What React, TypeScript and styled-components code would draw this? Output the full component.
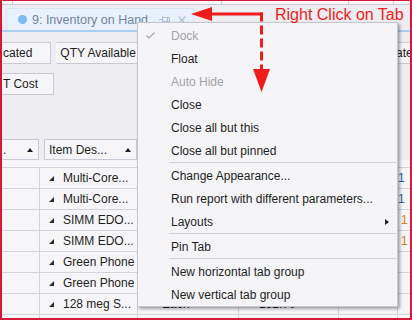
import React from 'react';
import styled, { createGlobalStyle } from 'styled-components';

const GlobalStyle = createGlobalStyle`
  html, body { margin: 0; padding: 0; background: #fff; }
  body {
    font-family: 'Liberation Sans', Arial, sans-serif;
    font-size: 12px;
    color: #1e1e1e;
  }
  * { box-sizing: border-box; }
`;

const Frame = styled.div`
  position: relative;
  width: 412px;
  height: 320px;
  border: 2px solid #d5183a;
  border-top-width: 1px;
  background: #eeeef2;
  overflow: hidden;
  display: flex;
  flex-direction: column;
`;

const TopStrip = styled.div`
  display: flex;
  height: 4px;
  background: #f7f7f9;
  border-bottom: 1px solid #c9c9d4;
  flex-shrink: 0;
`;

const StripCell = styled.div<{ $w: number }>`
  width: ${(p) => p.$w}px;
  flex-shrink: 0;
  border-right: 1px solid #c9c9d4;
`;

const TabRow = styled.div`
  display: flex;
  height: 24px;
  margin-top: 3px;
  padding-left: 4px;
  border-bottom: 2px solid #a8d0f4;
  flex-shrink: 0;
`;

const Tab = styled.div`
  display: flex;
  align-items: center;
  width: 188px;
  height: 22px;
  padding-left: 11px;
  background: #e9f2fc;
  border: 1px solid #d6e5f4;
  border-bottom: none;
  color: #6f839c;
  font-size: 12.5px;
  white-space: nowrap;
`;

const Dot = styled.span`
  width: 9px;
  height: 9px;
  border-radius: 50%;
  background: #7db9f2;
  margin-right: 5px;
  flex-shrink: 0;
`;

const TabIcons = styled.span`
  display: flex;
  align-items: center;
  gap: 8px;
  margin-left: auto;
  margin-right: 7px;
`;

const FieldsArea = styled.div`
  height: 107px;
  padding-top: 10px;
  display: flex;
  flex-direction: column;
  gap: 9px;
  flex-shrink: 0;
`;

const FieldRow = styled.div`
  display: flex;
  gap: 5px;
`;

const Field = styled.div<{ $w: number; $push?: boolean }>`
  width: ${(p) => p.$w}px;
  height: 22px;
  flex-shrink: 0;
  display: flex;
  align-items: center;
  padding-left: ${(p) => (p.$push ? 3 : 0)}px;
  margin-left: ${(p) => (p.$push ? 'auto' : '0')};
  margin-right: ${(p) => (p.$push ? '-12px' : '0')};
  background: #f6f6f8;
  border: 1px solid #c9c9d4;
  border-left-color: ${(p) => (p.$push ? '#c9c9d4' : 'transparent')};
  overflow: hidden;
  white-space: nowrap;
`;

const GridHeader = styled.div`
  display: flex;
  gap: 5px;
  height: 21px;
  flex-shrink: 0;
`;

const HeadCell = styled.div<{ $w: number; $first?: boolean }>`
  width: ${(p) => p.$w}px;
  flex-shrink: 0;
  display: flex;
  align-items: center;
  justify-content: space-between;
  padding: 0 5px 0 ${(p) => (p.$first ? 0 : 4)}px;
  background: #f6f6f8;
  border: 1px solid #cacad6;
  border-left-color: ${(p) => (p.$first ? 'transparent' : '#cacad6')};
  white-space: nowrap;
  overflow: hidden;
`;

const SortUp = styled.span`
  width: 0;
  height: 0;
  border-left: 3.5px solid transparent;
  border-right: 3.5px solid transparent;
  border-bottom: 4px solid #1e1e1e;
`;

const GridBody = styled.div`
  flex: 1;
  background: #f6f6f8;
  padding-top: 7px;
  overflow: hidden;
`;

const GridRow = styled.div`
  display: grid;
  grid-template-columns: 38px 98px 101px 100px 59px 1fr;
  height: 21px;
  border-top: 1px solid #d3d3de;
`;

const Cell = styled.div<{ $pad?: number; $color?: string }>`
  display: flex;
  align-items: center;
  padding-left: ${(p) => p.$pad ?? 0}px;
  border-right: 1px solid #d3d3de;
  color: ${(p) => p.$color ?? '#1e1e1e'};
  white-space: nowrap;
  overflow: hidden;
  &:last-child { border-right: none; }
`;

const RowMark = styled.span`
  width: 0;
  height: 0;
  border-left: 5px solid transparent;
  border-bottom: 5px solid #2a2a2a;
  margin-right: 9px;
  flex-shrink: 0;
`;

const Menu = styled.div`
  position: absolute;
  left: 135px;
  top: 21px;
  width: 261px;
  padding: 1px 0 0;
  background: #f5f5f7;
  border: 1px solid #c6c6ce;
  box-shadow: 2px 2px 3px rgba(0, 0, 0, 0.35);
  z-index: 5;
`;

const MenuItem = styled.div<{ $disabled?: boolean }>`
  position: relative;
  display: flex;
  align-items: center;
  height: 23px;
  padding-left: 33px;
  color: ${(p) => (p.$disabled ? '#a2a2a8' : '#1e1e1e')};
  white-space: nowrap;
`;

const Check = styled.svg`
  position: absolute;
  left: 8px;
  top: 8px;
`;

const SubArrow = styled.span`
  margin-left: auto;
  margin-right: 8px;
  width: 0;
  height: 0;
  border-top: 3.5px solid transparent;
  border-bottom: 3.5px solid transparent;
  border-left: 4px solid #1e1e1e;
`;

const Separator = styled.div`
  height: 1px;
  margin: 0 1px 1px 31px;
  background: #cfcfda;
`;

const Annotation = styled.div`
  position: absolute;
  left: 273px;
  top: 6px;
  font-family: 'Liberation Sans', Arial, sans-serif;
  font-size: 16px;
  line-height: 16px;
  color: #f01c1c;
  white-space: nowrap;
  z-index: 6;
`;

const Arrows = styled.svg`
  position: absolute;
  left: -2px;
  top: -1px;
  z-index: 7;
  pointer-events: none;
`;

const menuItems = [
  { label: 'Dock', disabled: true, checked: true },
  { label: 'Float' },
  { label: 'Auto Hide', disabled: true },
  { label: 'Close' },
  { label: 'Close all but this' },
  { label: 'Close all but pinned', sep: true },
  { label: 'Change Appearance...' },
  { label: 'Run report with different parameters...' },
  { label: 'Layouts', submenu: true, sep: true },
  { label: 'Pin Tab', sep: true },
  { label: 'New horizontal tab group' },
  { label: 'New vertical tab group' },
];

const rows = [
  { item: 'Multi-Core...', edge: '1', edgeColor: '#2b5fa5', edgePad: 0 },
  { item: 'Multi-Core...', edge: '1', edgeColor: '#2b5fa5', edgePad: 0 },
  { item: 'SIMM EDO...', edge: '1', edgeColor: '#e07b1a', edgePad: 3 },
  { item: 'SIMM EDO...', edge: '1', edgeColor: '#e07b1a', edgePad: 3 },
  { item: 'Green Phone' },
  { item: 'Green Phone' },
  { item: '128 meg S...', unit: 'Each', qty: '152.70' },
  { item: '' },
];

const PinIcon = () => (
  <svg width="11" height="9" viewBox="0 0 11 9" fill="none" stroke="#aabed5" strokeWidth="1">
    <path d="M0 4.5H3.5M3.5 0.5V8.5M3.5 2.5H10.5V6.5H3.5M8.5 2.5V6.5" />
  </svg>
);

const CloseIcon = () => (
  <svg width="8" height="8" viewBox="0 0 8 8" stroke="#aabed5" strokeWidth="1.2">
    <path d="M0.5 0.5L7.5 7.5M7.5 0.5L0.5 7.5" />
  </svg>
);

export default function App() {
  return (
    <>
      <GlobalStyle />
      <Frame>
        <TopStrip>
          <StripCell $w={11} />
          <StripCell $w={209} />
          <StripCell $w={127} />
          <StripCell $w={45} />
        </TopStrip>

        <TabRow>
          <Tab>
            <Dot />
            9: Inventory on Hand
            <TabIcons>
              <PinIcon />
              <CloseIcon />
            </TabIcons>
          </Tab>
        </TabRow>

        <FieldsArea>
          <FieldRow>
            <Field $w={49}>cated</Field>
            <Field $w={160}>&nbsp;QTY Available</Field>
            <Field $w={30} $push>ate</Field>
          </FieldRow>
          <FieldRow>
            <Field $w={52}>T Cost</Field>
          </FieldRow>
        </FieldsArea>

        <GridHeader>
          <HeadCell $w={37} $first>
            .
            <SortUp />
          </HeadCell>
          <HeadCell $w={93}>
            Item Des...
            <SortUp />
          </HeadCell>
        </GridHeader>

        <GridBody>
          {rows.map((r, i) => (
            <GridRow key={i}>
              <Cell />
              <Cell $pad={9}>
                {r.item && <RowMark />}
                {r.item}
              </Cell>
              <Cell $pad={24}>{r.unit}</Cell>
              <Cell $pad={20}>{r.qty}</Cell>
              <Cell />
              <Cell $pad={r.edgePad} $color={r.edgeColor}>{r.edge}</Cell>
            </GridRow>
          ))}
        </GridBody>

        <Menu>
          {menuItems.map((m) => (
            <React.Fragment key={m.label}>
              <MenuItem $disabled={m.disabled}>
                {m.checked && (
                  <Check width="9" height="7" viewBox="0 0 9 7" fill="none" stroke="#a2a2a8" strokeWidth="1.2">
                    <path d="M0.5 3.5L3 6L8.5 0.5" />
                  </Check>
                )}
                {m.label}
                {m.submenu && <SubArrow />}
              </MenuItem>
              {m.sep && <Separator />}
            </React.Fragment>
          ))}
        </Menu>

        <Annotation>Right Click on Tab</Annotation>

        <Arrows width="412" height="321" viewBox="0 0 412 321">
          <path d="M209 14H263" stroke="#f01c1c" strokeWidth="3" fill="none" />
          <polygon points="191,14 212,7 212,21" fill="#f01c1c" />
          <path d="M261.5 12.5V70" stroke="#f01c1c" strokeWidth="3" strokeDasharray="9 4" fill="none" />
          <polygon points="253,69 270,69 261.5,92" fill="#f01c1c" />
        </Arrows>
      </Frame>
    </>
  );
}
